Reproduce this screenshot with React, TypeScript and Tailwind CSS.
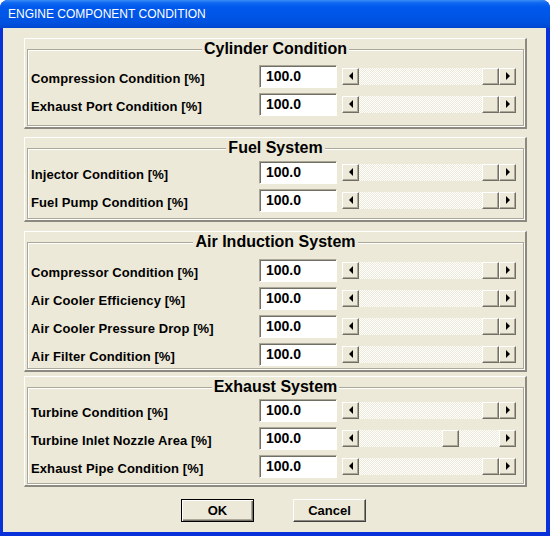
type Row = { label: string; value: number };

interface Group {
  title: string;
  top: string;
  pad: string;
  rows: Row[];
}

const groups: Group[] = [
  {
    title: 'Cylinder Condition',
    top: 'mt-[10px]',
    pad: 'pt-[15px] pb-[9px]',
    rows: [
      { label: 'Compression Condition [%]', value: 100 },
      { label: 'Exhaust Port Condition [%]', value: 100 },
    ],
  },
  {
    title: 'Fuel System',
    top: 'mt-[8px]',
    pad: 'pt-[12px] pb-[6px]',
    rows: [
      { label: 'Injector Condition [%]', value: 100 },
      { label: 'Fuel Pump Condition [%]', value: 100 },
    ],
  },
  {
    title: 'Air Induction System',
    top: 'mt-[9px]',
    pad: 'pt-[16px] pb-[2px]',
    rows: [
      { label: 'Compressor Condition [%]', value: 100 },
      { label: 'Air Cooler Efficiency [%]', value: 100 },
      { label: 'Air Cooler Pressure Drop [%]', value: 100 },
      { label: 'Air Filter Condition [%]', value: 100 },
    ],
  },
  {
    title: 'Exhaust System',
    top: 'mt-[4px]',
    pad: 'pt-[11px] pb-[5px]',
    rows: [
      { label: 'Turbine Condition [%]', value: 100 },
      { label: 'Turbine Inlet Nozzle Area [%]', value: 100 },
      { label: 'Exhaust Pipe Condition [%]', value: 100 },
    ],
  },
];

// thumb position in the track, 0..1 (nozzle slider sits mid-way)
const thumbPos: Record<string, number> = {
  'Turbine Inlet Nozzle Area [%]': 83 / 123,
};

const raised =
  'bg-[#ece9d8] border-t border-l border-t-white border-l-white border-r border-b border-r-[#716f64] border-b-[#716f64] shadow-[inset_-1px_-1px_0_#aca899]';

function ArrowBtn({ dir }: { dir: 'left' | 'right' }) {
  return (
    <div className={`w-[17px] h-[17px] flex items-center justify-center ${raised}`}>
      {dir === 'left' ? (
        <div className="w-0 h-0 border-y-[4px] border-y-transparent border-r-[4px] border-r-black" />
      ) : (
        <div className="w-0 h-0 border-y-[4px] border-y-transparent border-l-[4px] border-l-black" />
      )}
    </div>
  );
}

function ScrollBar({ pos }: { pos: number }) {
  return (
    <div className="flex w-[174px] h-[17px]">
      <ArrowBtn dir="left" />
      <div className="relative flex-1 bg-[repeating-conic-gradient(#ffffff_0%_25%,#ece9d8_0%_50%)] bg-[length:2px_2px]">
        <div className={`absolute top-0 w-[17px] h-[17px] ${raised}`} style={{ left: `${pos * 123}px` }} />
      </div>
      <ArrowBtn dir="right" />
    </div>
  );
}

function FieldRow({ row }: { row: Row }) {
  return (
    <div className="flex items-center h-[23px]">
      <div className="w-[231px] pl-[3px] pt-[4px] text-[13px] tracking-[0.1px] font-bold text-black whitespace-nowrap">
        {row.label}
      </div>
      <div className="w-[78px] h-[23px] bg-white border-t border-l border-t-[#aca899] border-l-[#aca899] border-r border-b border-r-white border-b-white shadow-[inset_1px_1px_0_#716f64] pl-[6px] flex items-center text-[14px] font-bold text-black">
        {row.value.toFixed(1)}
      </div>
      <div className="ml-[5px] -mt-[1px]">
        <ScrollBar pos={thumbPos[row.label] ?? 1} />
      </div>
    </div>
  );
}

function GroupBox({ group }: { group: Group }) {
  return (
    <div
      className={`${group.top} border-t border-l border-t-white border-l-white border-r-2 border-b-2 border-r-[#8c8a80] border-b-[#8c8a80] pt-[10px] pl-[2px] pr-[1px] pb-[1px]`}
    >
      <div className={`relative border border-[#aca899] shadow-[inset_1px_1px_0_#ffffff,1px_1px_0_#ffffff] ${group.pad} flex flex-col gap-[5px]`}>
        <div className="absolute left-0 right-0 -top-[10px] flex justify-center">
          <span className="bg-[#ece9d8] px-[2px] leading-[18px] text-[16px] font-bold text-black">{group.title}</span>
        </div>
        {group.rows.map((r) => (
          <FieldRow key={r.label} row={r} />
        ))}
      </div>
    </div>
  );
}

export default function App() {
  return (
    <div className="w-[550px] h-[536px] bg-white font-['Liberation_Sans',Arial,sans-serif]">
      <div className="w-full h-full flex flex-col rounded-t-[8px] bg-[#0831d9] overflow-hidden">
        <div className="h-[28px] shrink-0 flex items-center pl-[8px] bg-[linear-gradient(to_bottom,#3a8cf6_0%,#1069f0_10%,#0058ee_25%,#0055e5_60%,#0050dd_85%,#0046cf_100%)]">
          <span className="text-white text-[12px]">ENGINE COMPONENT CONDITION</span>
        </div>
        <div className="flex-1 ml-[3px] mr-[4px] mb-[4px] bg-[#ece9d8] pl-[21px] pr-[19px]">
          {groups.map((g) => (
            <GroupBox key={g.title} group={g} />
          ))}
          <div className="flex justify-center gap-[39px] mt-[12px] pr-[4px]">
            <button className="w-[73px] h-[23px] border border-black bg-[#ece9d8] shadow-[inset_1px_1px_0_#ffffff,inset_-1px_-1px_0_#716f64,inset_-2px_-2px_0_#aca899] text-[13px] font-bold text-black">
              OK
            </button>
            <button className="w-[73px] h-[23px] bg-[#ece9d8] border-t border-l border-t-white border-l-white border-r border-b border-r-[#404040] border-b-[#404040] shadow-[inset_-1px_-1px_0_#8c8a80] text-[13px] font-bold text-black">
              Cancel
            </button>
          </div>
        </div>
      </div>
    </div>
  );
}
